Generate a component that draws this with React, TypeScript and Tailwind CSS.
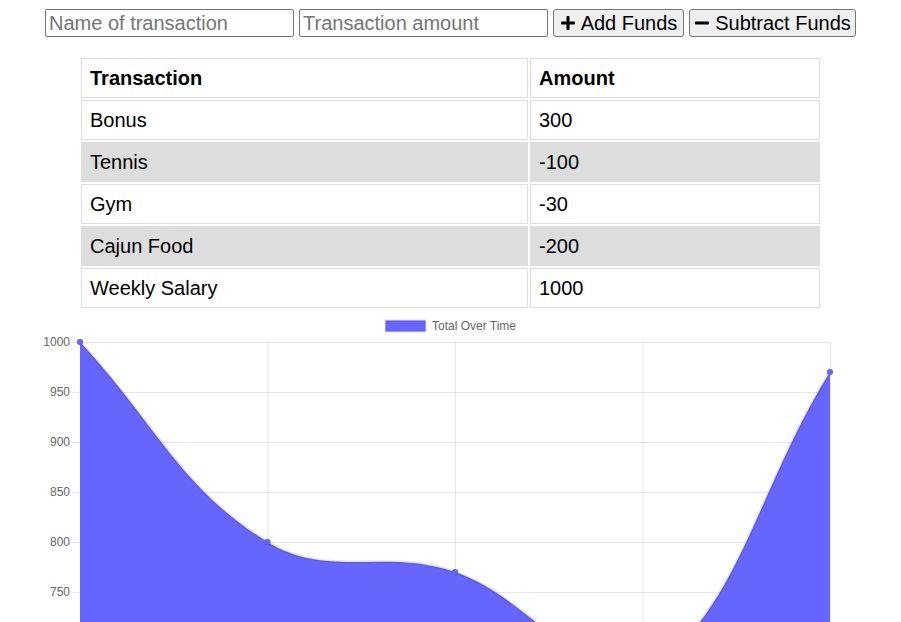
import { FaPlus, FaMinus } from "react-icons/fa";

const transactions = [
  { name: "Bonus", value: 300 },
  { name: "Tennis", value: -100 },
  { name: "Gym", value: -30 },
  { name: "Cajun Food", value: -200 },
  { name: "Weekly Salary", value: 1000 },
];

// running totals, oldest first
const totals = (() => {
  let sum = 0;
  return [...transactions].reverse().map((t) => (sum += t.value));
})();

const LEFT = 80;
const RIGHT = 830;
const TOP = 342;
const MIN = 650;
const MAX = 1000;
const BOTTOM = TOP + (MAX - MIN);

const px = (i: number) => LEFT + ((RIGHT - LEFT) / (totals.length - 1)) * i;
const py = (v: number) => TOP + (MAX - v);

function curvePath(pts: { x: number; y: number }[]) {
  const t = 0.4;
  const ctrl = pts.map((p, i) => {
    const prev = pts[i - 1] || p;
    const next = pts[i + 1] || p;
    const d01 = Math.hypot(p.x - prev.x, p.y - prev.y);
    const d12 = Math.hypot(next.x - p.x, next.y - p.y);
    const s01 = d01 / (d01 + d12 || 1);
    const s12 = d12 / (d01 + d12 || 1);
    const fa = t * s01;
    const fb = t * s12;
    const cap = (y: number) => Math.min(Math.max(y, TOP), BOTTOM);
    return {
      px: p.x - fa * (next.x - prev.x),
      py: cap(p.y - fa * (next.y - prev.y)),
      nx: p.x + fb * (next.x - prev.x),
      ny: cap(p.y + fb * (next.y - prev.y)),
    };
  });
  let d = `M${pts[0].x},${pts[0].y}`;
  for (let i = 1; i < pts.length; i++) {
    d += ` C${ctrl[i - 1].nx},${ctrl[i - 1].ny} ${ctrl[i].px},${ctrl[i].py} ${pts[i].x},${pts[i].y}`;
  }
  return d;
}

function Chart() {
  const pts = totals.map((v, i) => ({ x: px(i), y: py(v) }));
  const line = curvePath(pts);
  const yTicks = [1000, 950, 900, 850, 800, 750, 700, 650];
  return (
    <svg width={901} height={420} className="block">
      <g transform="translate(0,-310)" fontFamily="'Liberation Sans', Arial, sans-serif">
        {/* legend */}
        <rect x={385.5} y={320.5} width={40} height={11} fill="#6666ff" stroke="rgba(0,0,0,0.1)" strokeWidth={2} />
        <text x={432} y={330} fontSize={12} fill="#666">
          Total Over Time
        </text>

        {/* grid */}
        {yTicks.map((v) => (
          <g key={v}>
            <line x1={72} x2={RIGHT} y1={py(v) + 0.5} y2={py(v) + 0.5} stroke="rgba(0,0,0,0.1)" />
            <text x={70} y={py(v) + 4} fontSize={12} fill="#666" textAnchor="end">
              {v}
            </text>
          </g>
        ))}
        {totals.map((_, i) => (
          <line key={i} x1={px(i) + 0.5} x2={px(i) + 0.5} y1={TOP} y2={BOTTOM + 10} stroke="rgba(0,0,0,0.1)" />
        ))}

        {/* area */}
        <path d={`${line} L${RIGHT},${BOTTOM} L${LEFT},${BOTTOM} Z`} fill="#6666ff" />
        <path d={line} fill="none" stroke="rgba(0,0,0,0.1)" strokeWidth={3} />
        {pts.map((p, i) => (
          <circle key={i} cx={p.x} cy={p.y} r={3} fill="#6666ff" stroke="rgba(0,0,0,0.1)" />
        ))}
      </g>
    </svg>
  );
}

export default function App() {
  return (
    <div className="min-h-screen bg-white font-['Liberation_Sans',Arial,sans-serif] text-black">
      {/* form */}
      <div className="flex justify-center gap-[5px] pt-[9px]">
        <input
          type="text"
          placeholder="Name of transaction"
          className="h-[28px] w-[249px] rounded-[2px] border border-[#767676] px-[3px] text-[20px] placeholder:text-[#757575]"
        />
        <input
          type="number"
          placeholder="Transaction amount"
          className="h-[28px] w-[249px] rounded-[2px] border border-[#767676] px-[3px] text-[20px] placeholder:text-[#757575]"
        />
        <button className="flex h-[28px] w-[131px] items-center justify-center gap-[5px] whitespace-nowrap rounded-[3px] border border-[#767676] bg-[#efefef] px-[4px] text-[20px] leading-none">
          <FaPlus size={16} className="shrink-0" />
          Add Funds
        </button>
        <button className="flex h-[28px] w-[167px] items-center justify-center gap-[5px] whitespace-nowrap rounded-[3px] border border-[#767676] bg-[#efefef] px-[4px] text-[20px] leading-none">
          <FaMinus size={16} className="shrink-0" />
          Subtract Funds
        </button>
      </div>

      {/* transactions */}
      <table className="mx-auto mt-[19px] w-[743px] table-fixed border-separate border-spacing-[2px] text-left text-[20px]">
        <colgroup>
          <col className="w-[447px]" />
          <col className="w-[290px]" />
        </colgroup>
        <thead>
          <tr>
            <th className="border border-[#dddddd] px-[8px] py-[8px] leading-[22px] font-bold">Transaction</th>
            <th className="border border-[#dddddd] px-[8px] py-[8px] leading-[22px] font-bold">Amount</th>
          </tr>
        </thead>
        <tbody>
          {transactions.map((t, i) => (
            <tr key={t.name} className={i % 2 === 1 ? "bg-[#dddddd]" : "bg-white"}>
              <td className="border border-[#dddddd] px-[8px] py-[8px] leading-[22px]">{t.name}</td>
              <td className="border border-[#dddddd] px-[8px] py-[8px] leading-[22px]">{t.value}</td>
            </tr>
          ))}
        </tbody>
      </table>

      <Chart />
    </div>
  );
}
